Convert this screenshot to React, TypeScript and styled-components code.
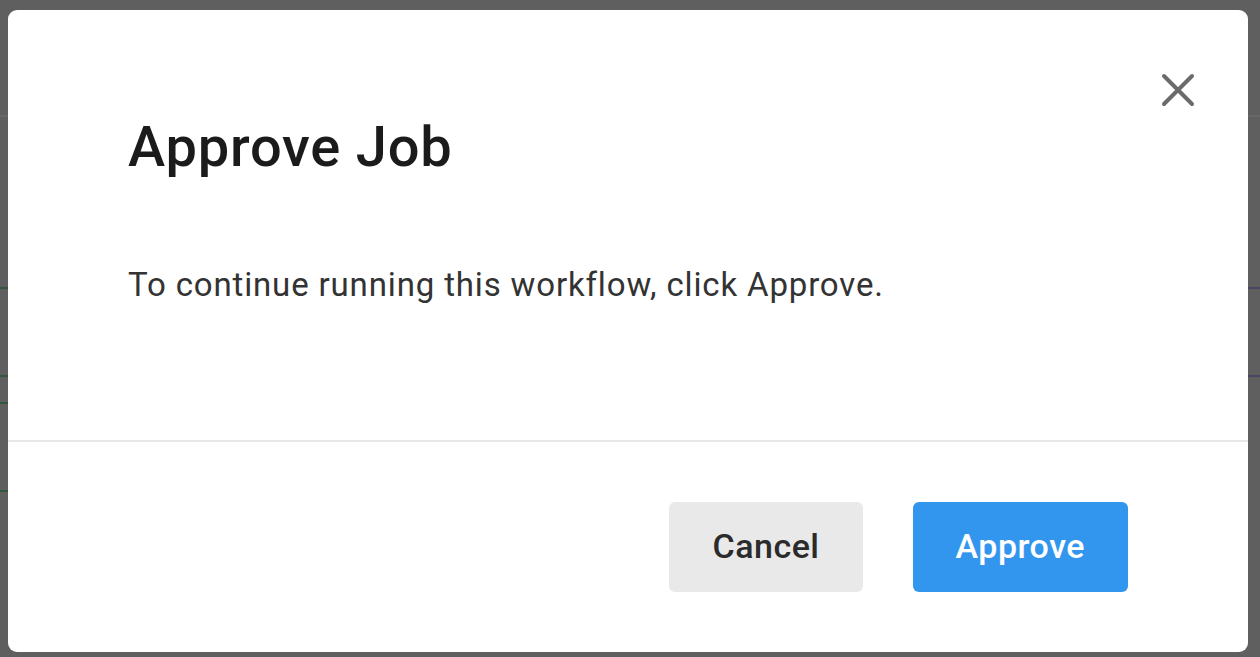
import React from "react";
import styled, { createGlobalStyle } from "styled-components";

const GlobalStyle = createGlobalStyle`
  html, body {
    margin: 0;
    padding: 0;
    background: #5f5f5f;
    font-family: Roboto, "Liberation Sans", Arial, sans-serif;
  }
  * { box-sizing: border-box; }
`;

const Page = styled.div`
  position: relative;
  width: 1260px;
  height: 657px;
  overflow: hidden;
  background: #5f5f5f;
`;

const Backdrop = styled.div`
  display: flex;
  flex-direction: column;
`;

const TopBar = styled.div`
  height: 117px;
  border-bottom: 2px solid #686868;
`;

const Gap = styled.div<{ $h: number }>`
  height: ${(p) => p.$h}px;
`;

const Line = styled.div`
  display: flex;
  height: 2px;
`;

const Seg = styled.div<{ $color: string }>`
  flex: 1;
  background: ${(p) => p.$color};
`;

const Overlay = styled.div`
  position: absolute;
  inset: 0;
  padding: 10px 12px 5px 8px;
  display: flex;
`;

const Modal = styled.div`
  position: relative;
  flex: 1;
  display: flex;
  flex-direction: column;
  background: #ffffff;
  border-radius: 9px;
  overflow: hidden;
`;

const CloseButton = styled.button`
  position: absolute;
  top: 48px;
  right: 38px;
  width: 64px;
  height: 64px;
  display: flex;
  align-items: center;
  justify-content: center;
  border: none;
  background: transparent;
  padding: 0;
  cursor: pointer;
`;

const Body = styled.div`
  padding: 104px 120px 131px;
  display: flex;
  flex-direction: column;
  gap: 80px;
`;

const Title = styled.h2`
  margin: 0;
  font-size: 56px;
  line-height: 67px;
  font-weight: 500;
  color: #1b1b1b;
  letter-spacing: 0.8px;
`;

const Message = styled.p`
  margin: 0;
  font-size: 33px;
  line-height: 48px;
  font-weight: 400;
  color: #333333;
  letter-spacing: 0.85px;
`;

const Footer = styled.div`
  border-top: 2px solid #e8e8e8;
  padding: 60px 120px;
  display: flex;
  justify-content: flex-end;
  gap: 50px;
`;

const Button = styled.button<{ $primary?: boolean }>`
  height: 90px;
  padding: 0 43px 3px;
  border: none;
  border-radius: 6px;
  font-family: Roboto, "Liberation Sans", Arial, sans-serif;
  font-size: 34px;
  font-weight: 500;
  letter-spacing: 0.5px;
  background: ${(p) => (p.$primary ? "#3396ee" : "#e9e9e9")};
  color: ${(p) => (p.$primary ? "#ffffff" : "#2b2b2b")};
  cursor: pointer;
`;

export default function App() {
  return (
    <Page>
      <GlobalStyle />
      <Backdrop>
        <TopBar />
        <Gap $h={170} />
        <Line>
          <Seg $color="#2f5a3e" />
          <Seg $color="#4a4464" />
        </Line>
        <Gap $h={86} />
        <Line>
          <Seg $color="#2f5a3e" />
          <Seg $color="#4a4464" />
        </Line>
        <Gap $h={25} />
        <Line>
          <Seg $color="#2f5a3e" />
          <Seg $color="#5f5f5f" />
        </Line>
        <Gap $h={86} />
        <Line>
          <Seg $color="#2f5a3e" />
          <Seg $color="#5f5f5f" />
        </Line>
      </Backdrop>
      <Overlay>
        <Modal role="dialog" aria-label="Approve Job">
          <CloseButton aria-label="Close">
            <svg width="34" height="34" viewBox="0 0 34 34">
              <path
                d="M3 3 L31 31 M31 3 L3 31"
                stroke="#6b6b6b"
                strokeWidth="4"
                strokeLinecap="round"
              />
            </svg>
          </CloseButton>
          <Body>
            <Title>Approve Job</Title>
            <Message>To continue running this workflow, click Approve.</Message>
          </Body>
          <Footer>
            <Button>Cancel</Button>
            <Button $primary>Approve</Button>
          </Footer>
        </Modal>
      </Overlay>
    </Page>
  );
}
